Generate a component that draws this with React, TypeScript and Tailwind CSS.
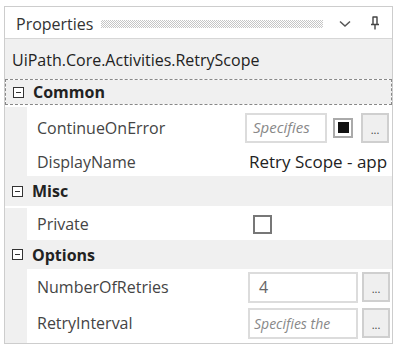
import React from "react";

const font = { fontFamily: '"Open Sans", "Noto Sans", sans-serif' };

function Dots() {
  return (
    <button className="w-[28px] h-[30px] border-2 border-[#cfcfcf] bg-[#efefef] flex items-end justify-center pb-[6px] text-[11px] leading-none text-[#444] shrink-0">
      ...
    </button>
  );
}

function Header({ label, h }: { label: string; h: string }) {
  return (
    <div className={"flex items-center bg-[#f0f0f0] pl-[7px] gap-[9px] shrink-0 " + h}>
      <div className="w-[11px] h-[11px] border border-[#333] flex items-center justify-center bg-white">
        <div className="w-[5px] h-px bg-[#333]" />
      </div>
      <span className="font-bold text-[16px] text-[#222]">{label}</span>
    </div>
  );
}

function Row({ label, h, children }: { label: string; h: string; children?: React.ReactNode }) {
  return (
    <div className={"flex shrink-0 " + h}>
      <div className="w-[22px] bg-[#f0f0f0] shrink-0" />
      <div className="flex-1 flex items-center bg-white min-w-0">
        <div className="w-[218px] pl-[10px] text-[16px] text-[#444] shrink-0">{label}</div>
        <div className="flex-1 flex items-center gap-[4px] overflow-hidden">{children}</div>
      </div>
    </div>
  );
}

export default function App() {
  return (
    <div className="w-[401px] h-[354px] bg-white pt-[6px] pl-[4px]" style={font}>
      <div className="w-[389px] h-[338px] border border-[#cdcdcd] flex flex-col overflow-hidden">
        <div className="h-[32px] flex items-center pl-[11px] pr-[12px] gap-[8px] border-b border-[#d6d6d6] shrink-0">
          <span className="text-[16px] text-[#333] pt-[2px]">Properties</span>
          <div className="flex-1 h-[8px] bg-[conic-gradient(#c6c6c6_25%,transparent_0_50%,#c6c6c6_0_75%,transparent_0)] bg-[length:2px_2px] mr-[8px] mt-[2px]" />
          <svg width="12" height="8" viewBox="0 0 12 8" className="mr-[11px] mt-[3px]">
            <path d="M1 1.5 L6 6 L11 1.5" fill="none" stroke="#555" strokeWidth="1.5" />
          </svg>
          <svg width="10" height="14" viewBox="0 0 10 14">
            <path d="M2.5 1 H7.5 M3 1 V8 M7 1 V8 M1 8.5 H9 M5 8.5 V13.5" fill="none" stroke="#444" strokeWidth="1.4" />
          </svg>
        </div>
        <div className="h-[40px] bg-[#f0f0f0] flex items-center pl-[7px] pt-[1px] text-[16px] text-[#222] shrink-0">
          UiPath.Core.Activities.RetryScope
        </div>
        <div className="border border-dashed border-[#888] shrink-0">
          <Header label="Common" h="h-[24px]" />
        </div>
        <Row label="ContinueOnError" h="h-[43px] pt-[2px]">
          <div className="w-[82px] h-[30px] border-2 border-[#dcdcdc] flex items-center pl-[6px] text-[15px] italic text-[#888] shrink-0">
            Specifies
          </div>
          <div className="w-[20px] h-[20px] border-2 border-[#aaa] flex items-center justify-center ml-[2px] mr-[4px] shrink-0">
            <div className="w-[11px] h-[11px] bg-[#111]" />
          </div>
          <Dots />
        </Row>
        <Row label="DisplayName" h="h-[28px]">
          <span className="pl-[4px] text-[17px] text-[#222] whitespace-nowrap">Retry Scope - app</span>
        </Row>
        <Header label="Misc" h="h-[30px]" />
        <Row label="Private" h="h-[34px] pt-[2px]">
          <div className="ml-[8px] w-[19px] h-[19px] border-2 border-[#777] bg-white" />
        </Row>
        <Header label="Options" h="h-[29px]" />
        <Row label="NumberOfRetries" h="h-[36px]">
          <div className="ml-[3px] w-[110px] h-[31px] border-2 border-[#dcdcdc] flex items-center pl-[9px] text-[16px] text-[#666] shrink-0">
            4
          </div>
          <Dots />
        </Row>
        <Row label="RetryInterval" h="h-[36px]">
          <div className="ml-[3px] w-[110px] h-[31px] border-2 border-[#dcdcdc] flex items-center pl-[4px] text-[14px] italic text-[#888] whitespace-nowrap overflow-hidden shrink-0">
            Specifies the
          </div>
          <Dots />
        </Row>
        <div className="flex-1 flex">
          <div className="w-[22px] bg-[#f0f0f0]" />
        </div>
      </div>
    </div>
  );
}
